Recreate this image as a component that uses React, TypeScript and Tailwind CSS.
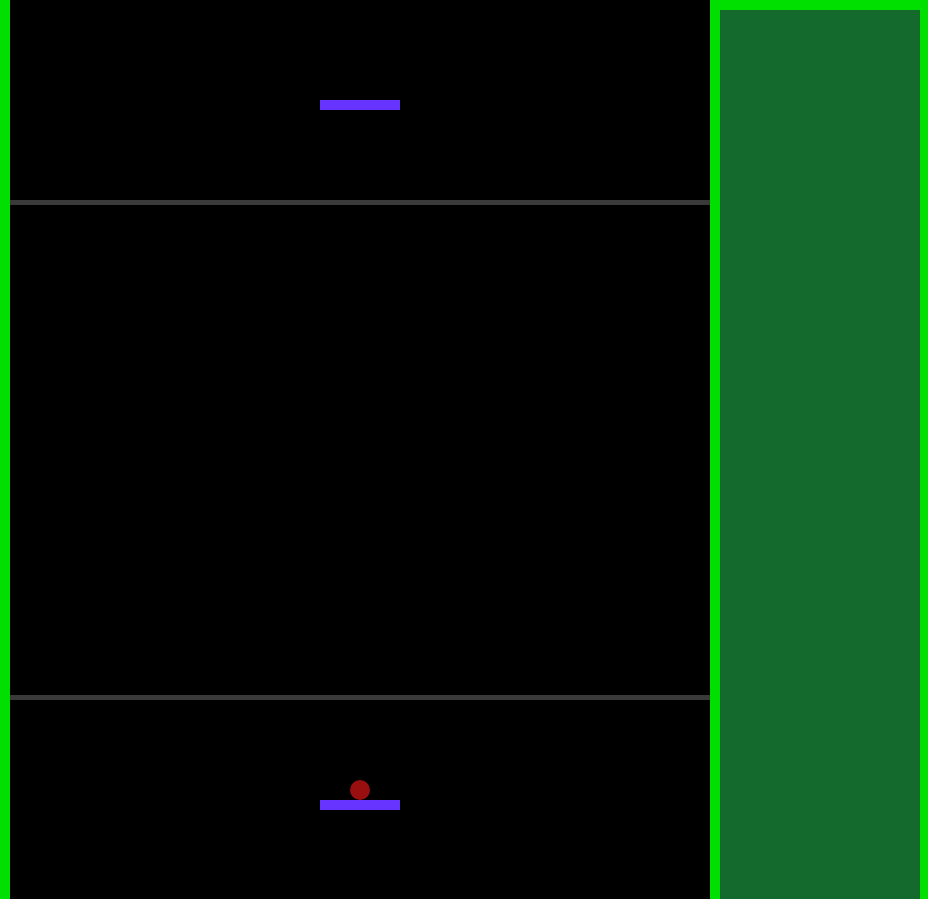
const Paddle = ({ top }: { top: number }) => (
  <div
    className="absolute left-[310px] w-[80px] h-[10px] bg-[#6633ff]"
    style={{ top }}
  />
);

const App = () => {
  return (
    <div className="flex w-[928px] h-[899px] overflow-hidden bg-black">
      {/* game field */}
      <div className="relative w-[710px] h-[899px] shrink-0 border-l-[10px] border-[#00e000] bg-black flex flex-col">
        <div className="h-[200px] shrink-0" />
        <div className="h-[5px] shrink-0 bg-[#3a3a3a]" />
        <div className="h-[490px] shrink-0" />
        <div className="h-[5px] shrink-0 bg-[#3a3a3a]" />
        <div className="flex-1" />

        <Paddle top={100} />
        <Paddle top={800} />
        <div className="absolute left-[340px] top-[780px] w-[20px] h-[20px] rounded-full bg-[#990f0f]" />
      </div>

      {/* side panel */}
      <div className="w-[220px] h-[910px] shrink-0 border-[10px] border-[#00e000] bg-[#146a2d]" />
    </div>
  );
};

export default App;
